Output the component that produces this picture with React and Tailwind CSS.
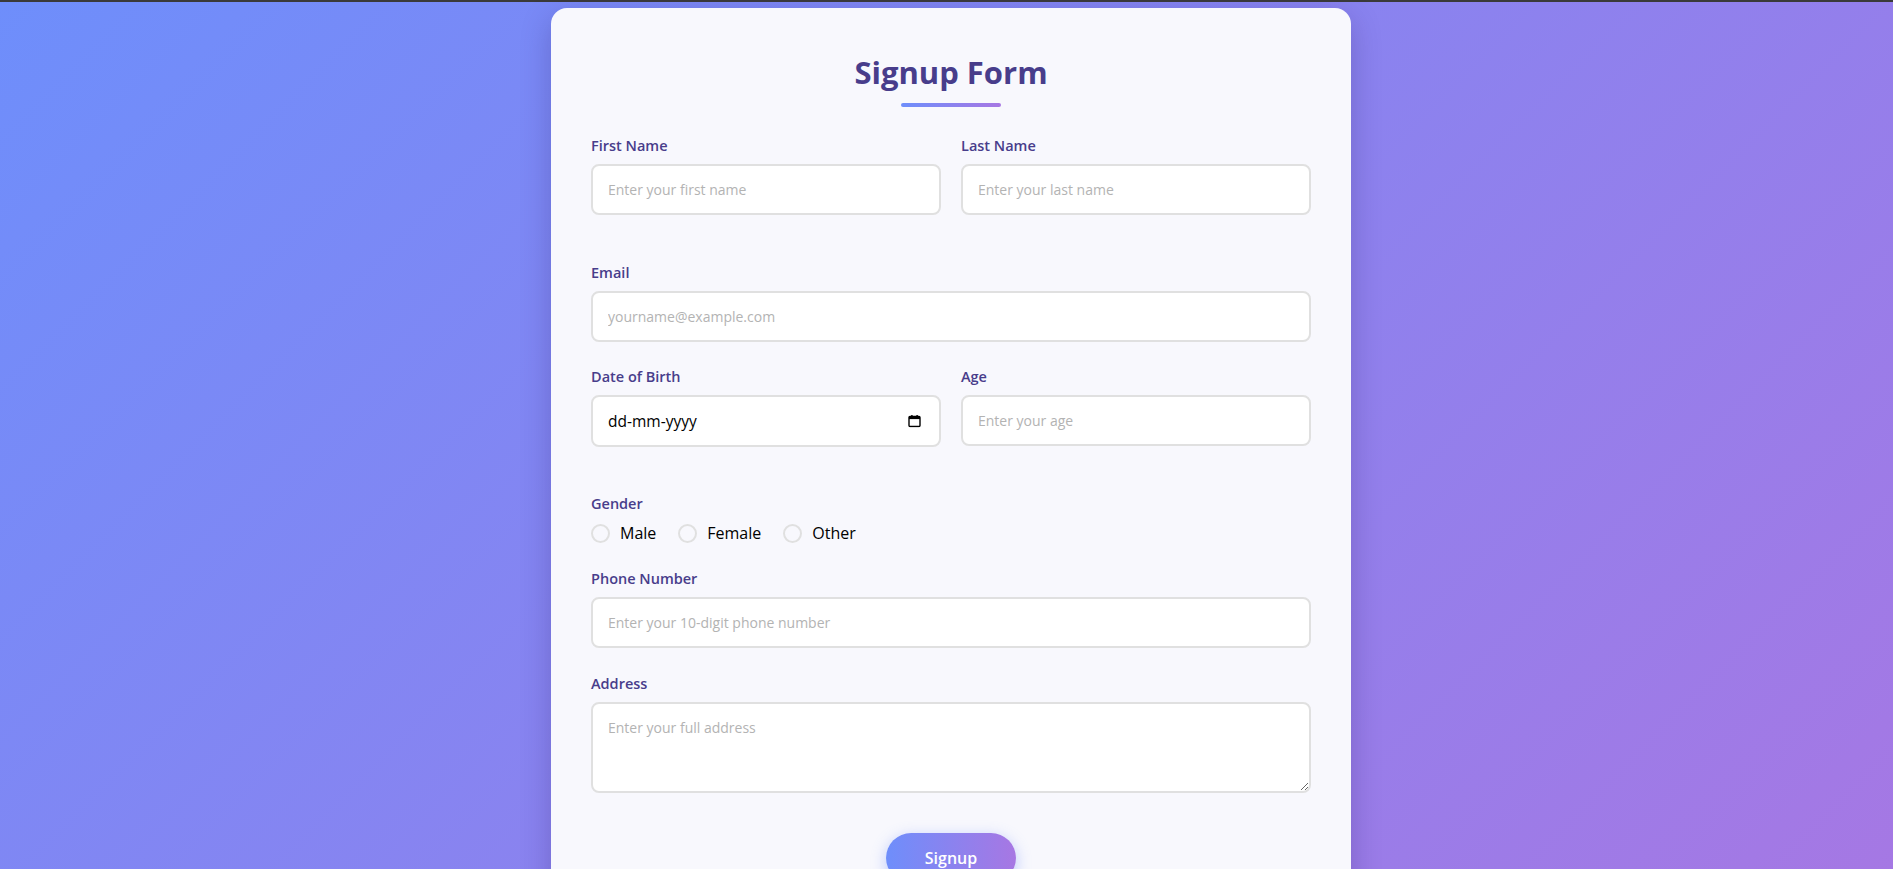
import React, { useState } from "react";

const labelCls =
  "block text-[14.5px] leading-5 font-semibold text-[#483d8b] mb-2";
const inputCls =
  "block w-full bg-white border-2 border-[#e0e0e0] rounded-lg px-[15px] py-[14px] text-[14px] leading-[19px] text-gray-800 placeholder:text-[#b3b3b3] outline-none focus:border-[#a777e3]";

const CalendarIcon = () => (
  <svg width="13" height="13" viewBox="0 0 13 13" className="text-black">
    <rect x="1" y="2" width="11" height="10" rx="1" fill="none" stroke="currentColor" strokeWidth="1.4" />
    <rect x="1" y="2" width="11" height="2.6" fill="currentColor" />
    <rect x="3.2" y="0.5" width="1.4" height="2.5" fill="currentColor" />
    <rect x="8.4" y="0.5" width="1.4" height="2.5" fill="currentColor" />
  </svg>
);

export default function App() {
  const [form, setForm] = useState({
    firstName: "",
    lastName: "",
    email: "",
    dob: "",
    age: "",
    gender: "",
    phone: "",
    address: "",
  });

  const handleChange = (e) => {
    setForm({ ...form, [e.target.name]: e.target.value });
  };

  return (
    <div
      className="min-h-screen bg-[linear-gradient(135deg,#6e8efb,#a777e3)] border-t-2 border-[#3a3a3a]"
      style={{ fontFamily: '"Open Sans", "Noto Sans", sans-serif' }}
    >
      <div className="flex justify-center pt-[6px] pb-10 pl-[9px]">
        <form
          onSubmit={(e) => e.preventDefault()}
          className="w-[800px] bg-[#f8f8fd] rounded-2xl px-10 pt-[44px] pb-10 shadow-[0_10px_30px_rgba(40,20,90,0.25)]"
        >
          <h2 className="text-center text-[31px] leading-[40px] font-bold text-[#483d8b]">
            Signup Form
          </h2>
          <div className="mx-auto mt-[11px] mb-[29px] w-[100px] h-1 rounded bg-[linear-gradient(90deg,#6e8efb,#a777e3)]" />

          <div className="grid grid-cols-2 gap-5 mb-[48px]">
            <div>
              <label className={labelCls}>First Name</label>
              <input name="firstName" value={form.firstName} onChange={handleChange} placeholder="Enter your first name" className={inputCls} />
            </div>
            <div>
              <label className={labelCls}>Last Name</label>
              <input name="lastName" value={form.lastName} onChange={handleChange} placeholder="Enter your last name" className={inputCls} />
            </div>
          </div>

          <div className="mb-[25px]">
            <label className={labelCls}>Email</label>
            <input type="email" name="email" value={form.email} onChange={handleChange} placeholder="yourname@example.com" className={inputCls} />
          </div>

          <div className="grid grid-cols-2 gap-5 mb-[47px] items-start">
            <div>
              <label className={labelCls}>Date of Birth</label>
              <div className="relative">
                <input
                  name="dob"
                  value={form.dob}
                  onChange={handleChange}
                  placeholder="dd-mm-yyyy"
                  className="block w-full bg-white border-2 border-[#e0e0e0] rounded-lg px-[15px] py-[15px] text-[15.5px] leading-[18px] text-black placeholder:text-black outline-none"
                />
                <span className="absolute right-[20px] top-1/2 -translate-y-1/2 flex">
                  <CalendarIcon />
                </span>
              </div>
            </div>
            <div>
              <label className={labelCls}>Age</label>
              <input name="age" value={form.age} onChange={handleChange} placeholder="Enter your age" className={inputCls} />
            </div>
          </div>

          <div className="mb-[26px]">
            <label className="block text-[14.5px] leading-5 font-semibold text-[#483d8b] mb-[9px]">Gender</label>
            <div className="flex items-center gap-[22px] text-[16px] leading-5 text-black">
              {["Male", "Female", "Other"].map((g) => (
                <label key={g} className="flex items-center gap-[10px]">
                  <input
                    type="radio"
                    name="gender"
                    value={g}
                    checked={form.gender === g}
                    onChange={handleChange}
                    className="appearance-none w-[19px] h-[19px] rounded-full border-2 border-[#e0e0e0] bg-transparent checked:border-[6px] checked:border-[#a777e3]"
                  />
                  {g}
                </label>
              ))}
            </div>
          </div>

          <div className="mb-[26px]">
            <label className={labelCls}>Phone Number</label>
            <input type="tel" name="phone" value={form.phone} onChange={handleChange} placeholder="Enter your 10-digit phone number" className={inputCls} />
          </div>

          <div className="mb-10">
            <label className={labelCls}>Address</label>
            <textarea
              name="address"
              value={form.address}
              onChange={handleChange}
              placeholder="Enter your full address"
              className="block w-full h-[91px] bg-white border-2 border-[#e0e0e0] rounded-lg px-[15px] pt-[14px] pb-[12px] text-[14px] leading-[19px] placeholder:text-[#b3b3b3] outline-none"
            />
          </div>

          <div className="flex justify-center">
            <button
              type="submit"
              className="w-[130px] h-[50px] rounded-full text-white text-[16px] font-semibold bg-[linear-gradient(90deg,#6e8efb,#a777e3)] shadow-[0_4px_15px_rgba(110,142,251,0.45)]"
            >
              Signup
            </button>
          </div>
        </form>
      </div>
    </div>
  );
}
